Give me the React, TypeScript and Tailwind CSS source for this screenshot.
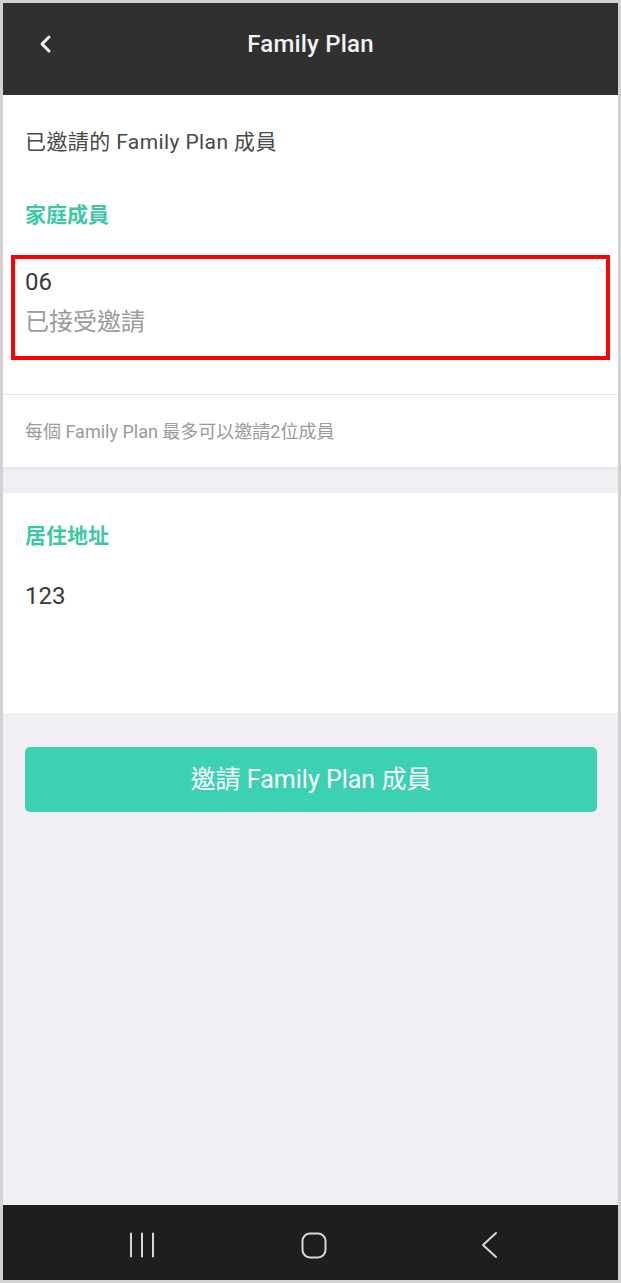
import React from 'react'

const font = { fontFamily: 'Roboto, "Noto Sans CJK TC", sans-serif' }

function BackChevron() {
  return (
    <svg width="18" height="22" viewBox="0 0 18 22" fill="none">
      <path d="M12 4 L5 11 L12 18" stroke="#f2f2f2" strokeWidth="3" strokeLinecap="round" strokeLinejoin="round" />
    </svg>
  )
}

function NavBar() {
  return (
    <div className="h-[75px] bg-[#1e1e1e] flex items-center pl-[122px] pt-[5px]">
      <svg width="30" height="26" viewBox="0 0 30 26" fill="none">
        <path d="M6 1.5 V24.5 M17 1.5 V24.5 M28 1.5 V24.5" stroke="#d8d8d8" strokeWidth="2" strokeLinecap="round" />
      </svg>
      <svg width="27" height="27" viewBox="0 0 27 27" fill="none" className="ml-[146px]">
        <rect x="1.5" y="1.5" width="23" height="24" rx="7.5" stroke="#d8d8d8" strokeWidth="2" />
      </svg>
      <svg width="22" height="28" viewBox="0 0 22 28" fill="none" className="ml-[151px]">
        <path d="M17 2 L4 14 L17 26" stroke="#d8d8d8" strokeWidth="2" strokeLinecap="round" strokeLinejoin="round" />
      </svg>
    </div>
  )
}

export default function App() {
  return (
    <div
      className="w-[621px] h-[1283px] border-[3px] border-[#d2d2d2] bg-[#efeff4] flex flex-col overflow-hidden"
      style={font}
    >
      {/* Header */}
      <div className="h-[92px] bg-[#303030] relative flex items-start justify-center pt-[26px] shrink-0">
        <div className="absolute left-[34px] top-[30px]">
          <BackChevron />
        </div>
        <span className="text-[24px] font-medium text-[#f2f2f2] leading-[30px] tracking-[0.2px]">Family Plan</span>
      </div>

      {/* Members */}
      <div className="bg-white shadow-[0_2px_4px_rgba(0,0,0,0.06)]">
        <div className="px-[22px] pt-[33px]">
          <p className="text-[21px] leading-[28px] text-[#484848] tracking-[0.4px]">已邀請的 Family Plan 成員</p>
          <p className="mt-[45px] text-[21px] leading-[28px] font-bold text-[#3cc8a6]">家庭成員</p>
        </div>
        <div className="mx-[8px] mt-[26px] h-[105px] border-[4px] border-[#ff0000] pl-[10px] pt-[8px]">
          <p className="text-[24px] leading-[30px] text-[#3a3a3a]">06</p>
          <p className="mt-[10px] text-[24px] leading-[30px] text-[#9b9b9b]">已接受邀請</p>
        </div>
        <div className="mt-[34px] h-px bg-[#e9e9e9]" />
        <p className="px-[22px] pt-[27px] pb-[25px] text-[18px] leading-[20px] text-[#9a9a9a]">
          每個 Family Plan 最多可以邀請2位成員
        </p>
      </div>

      {/* Address */}
      <div className="mt-[26px] bg-white h-[220px] px-[22px] pt-[29px]">
        <p className="text-[21px] leading-[28px] font-bold text-[#3cc8a6]">居住地址</p>
        <p className="mt-[31px] text-[24px] leading-[30px] text-[#3a3a3a]">123</p>
      </div>

      {/* Invite */}
      <div className="px-[22px] pt-[34px]">
        <button className="w-[572px] h-[65px] rounded-[5px] bg-[#3cd1b3] text-white text-[25px] flex items-center justify-center">
          邀請 Family Plan 成員
        </button>
      </div>

      <div className="flex-1" />
      <NavBar />
    </div>
  )
}
